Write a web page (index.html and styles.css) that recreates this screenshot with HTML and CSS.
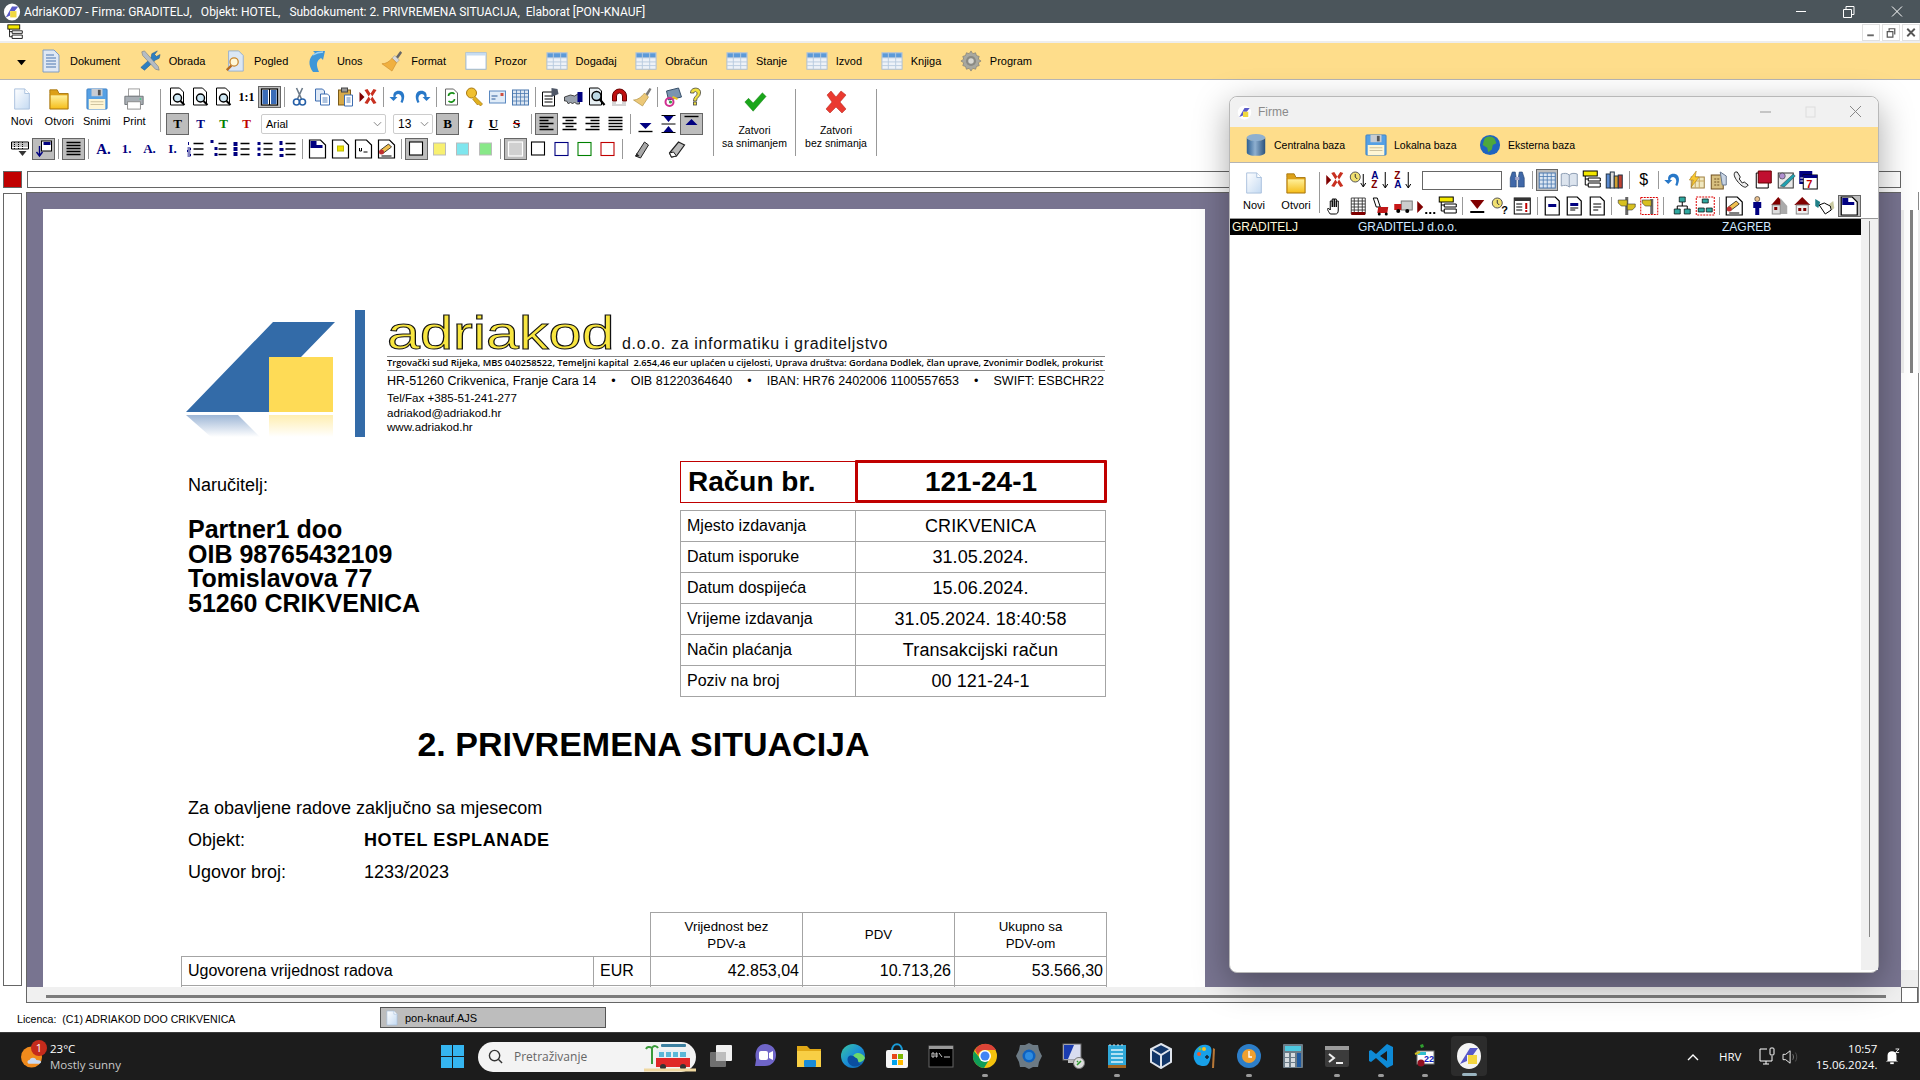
FILE: index.html
```html
<!DOCTYPE html>
<html lang="hr">
<head>
<meta charset="utf-8">
<title>AdriaKOD7</title>
<link rel="stylesheet" href="styles.css">
</head>
<body>
<svg class="defs" width="0" height="0">
<defs>
<linearGradient id="gPage" x1="0" y1="0" x2="1" y2="1"><stop offset="0" stop-color="#fff"/><stop offset="1" stop-color="#c4daf2"/></linearGradient>
<linearGradient id="gFold" x1="0" y1="0" x2="0" y2="1"><stop offset="0" stop-color="#fff09a"/><stop offset="1" stop-color="#f6c020"/></linearGradient>
<linearGradient id="gDb" x1="0" y1="0" x2="1" y2="0"><stop offset="0" stop-color="#2c5f92"/><stop offset=".45" stop-color="#8fb0d0"/><stop offset="1" stop-color="#2a527c"/></linearGradient>
<linearGradient id="gFadeB" x1="0" y1="0" x2="0" y2="1"><stop offset="0" stop-color="#9db6d6"/><stop offset="1" stop-color="#fff"/></linearGradient>
<linearGradient id="gFadeY" x1="0" y1="0" x2="0" y2="1"><stop offset="0" stop-color="#ffeeb0"/><stop offset="1" stop-color="#fff"/></linearGradient>
<linearGradient id="gEdge" x1="0" y1="0" x2="1" y2="1"><stop offset="0" stop-color="#37c6a0"/><stop offset=".5" stop-color="#1b8fd6"/><stop offset="1" stop-color="#0c5aa8"/></linearGradient>

<symbol id="m-doc" viewBox="0 0 20 24"><path d="M2 1h11l5 5v17H2z" fill="#dfe8f4" stroke="#7f9cc4"/><path d="M5 6h8M5 9h10M5 12h10M5 15h10M5 18h10" stroke="#4d77b0" stroke-width="1.2"/></symbol>
<symbol id="m-tools" viewBox="0 0 24 24"><path d="M20 1l-3 4 2 2 4-2-1 4-4 2-12 11-4-3L13 9l1-5z" fill="#2d7fc0" stroke="#1d5a90" stroke-width=".6"/><path d="M3 2l3-1 15 17 1 4-4-1L4 6z" fill="#b4bcc4" stroke="#6c747c" stroke-width=".6"/></symbol>
<symbol id="m-pogled" viewBox="0 0 24 24"><path d="M5 1h11l5 5v17H5z" fill="#dbe7f5" stroke="#93aed0"/><circle cx="11" cy="13" r="4.5" fill="#fff8d8" stroke="#c8862c" stroke-width="1.4"/><path d="M8 17l-5 5" stroke="#b66a20" stroke-width="2.5"/></symbol>
<symbol id="m-unos" viewBox="0 0 22 24"><path d="M6 23c-5-7-5-14 2-19l-2-2h12l-2 9-2-2C9 12 9 16 12 23z" fill="#3f97d8"/><path d="M6 6c3-2 7-3 10-3" stroke="#9fd3f4" stroke-width="1.5" fill="none"/></symbol>
<symbol id="m-format" viewBox="0 0 24 24"><path d="M16 8l5-7 2 2-5 7z" fill="#666"/><path d="M15 6l5 5-3 3-5-5z" fill="#d8d8d8" stroke="#888" stroke-width=".5"/><path d="M12 9l5 5-5 9-11-8c4 0 8-2 11-6z" fill="#f0b040" stroke="#c07818" stroke-width=".5"/></symbol>
<symbol id="m-prozor" viewBox="0 0 24 22"><rect x="1" y="2" width="22" height="18" fill="#fff" stroke="#8fb2d8"/><rect x="1" y="2" width="22" height="3" fill="#c6dcf2"/></symbol>
<symbol id="m-table" viewBox="0 0 24 22"><rect x="1" y="2" width="22" height="18" fill="#eef2f8" stroke="#a8bcd4"/><path d="M1.500 2.500h21v5h-21z" fill="#5d9ad8"/><path d="M8 2v18M16 2v18M1 7.500h22M1 12h22M1 16h22" stroke="#b8cade"/></symbol>
<symbol id="m-gear" viewBox="0 0 24 24"><path d="M12 1l2 3 3-1 1 3 3 1-1 3 3 2-3 2 1 3-3 1-1 3-3-1-2 3-2-3-3 1-1-3-3-1 1-3-3-2 3-2-1-3 3-1 1-3 3 1z" fill="#a8a8a0" stroke="#70706a" stroke-width=".6"/><circle cx="12" cy="12" r="5.500" fill="#8a8a84"/><circle cx="12" cy="12" r="3" fill="#d8d8d2"/></symbol>

<symbol id="b-new" viewBox="0 0 22 24"><path d="M3 1h11l5 5v17H3z" fill="url(#gPage)" stroke="#a6bedc"/><path d="M14 1v5h5" fill="#fff" stroke="#a6bedc"/></symbol>
<symbol id="b-open" viewBox="0 0 24 24"><path d="M2 6V2h8l2 4h10v17H2z" fill="#dca018" stroke="#a87810"/><rect x="3" y="8" width="18" height="14" fill="url(#gFold)"/></symbol>
<symbol id="b-save" viewBox="0 0 24 24"><rect x="1" y="1" width="22" height="22" rx="1" fill="#55a0e4" stroke="#3c80c4"/><rect x="6" y="1" width="12" height="8" fill="#c8ccd2"/><rect x="13" y="2" width="3" height="6" fill="#555"/><rect x="3" y="12" width="18" height="11" fill="#fff6d4"/><path d="M5 15h14M5 18h14" stroke="#c8bc98"/></symbol>
<symbol id="b-print" viewBox="0 0 24 24"><rect x="6" y="1" width="12" height="8" fill="#fff" stroke="#999"/><path d="M2 9h20v9H2z" fill="#a8aeb4" stroke="#6d7378"/><rect x="5" y="15" width="14" height="8" fill="#fff" stroke="#888"/><circle cx="19" cy="12" r="1" fill="#4c8"/></symbol>
<symbol id="b-check" viewBox="0 0 26 22"><path d="M2 11l4-4 5 5L21 1l4 4-14 16z" fill="#1aa61a" stroke="#0c7a0c" stroke-width=".5"/></symbol>
<symbol id="b-cross" viewBox="0 0 24 24"><path d="M3 5l4-4 5 6 5-6 5 4-6 7 6 7-4 4-6-6-6 6-4-4 6-7z" fill="#ea3a30" stroke="#b02018" stroke-width=".5"/></symbol>

<symbol id="t-prev" viewBox="0 0 20 20"><path d="M3 1h9l4 4v13H3z" fill="#fff" stroke="#000"/><circle cx="10" cy="11" r="4" fill="#cfe8f4" stroke="#000" stroke-width="1.4"/><path d="M13 14l4 4" stroke="#000" stroke-width="2"/></symbol>
<symbol id="t-book" viewBox="0 0 20 20"><rect x="2" y="2" width="16" height="16" fill="#fff" stroke="#000" stroke-width="1.2"/><rect x="3" y="3" width="5.500" height="14" fill="#3a6cb8"/><rect x="11.500" y="3" width="5.500" height="14" fill="#3a6cb8"/><path d="M10 2v16" stroke="#000"/></symbol>
<symbol id="t-cut" viewBox="0 0 20 20"><path d="M7 1l5 11M13 1l-5 11" stroke="#6c7a88" stroke-width="1.6"/><circle cx="7" cy="15" r="3" fill="none" stroke="#2760a8" stroke-width="1.6"/><circle cx="13" cy="15" r="3" fill="none" stroke="#2760a8" stroke-width="1.6"/></symbol>
<symbol id="t-copy" viewBox="0 0 20 20"><path d="M3 2h7l2 2v10H3z" fill="#dfe9f6" stroke="#3c6cb0"/><path d="M8 7h7l2 2v9H8z" fill="#fff" stroke="#3c6cb0"/><path d="M10 11h5M10 13h5M10 15h5" stroke="#5d87c0"/></symbol>
<symbol id="t-paste" viewBox="0 0 20 20"><rect x="3" y="3" width="12" height="15" fill="#d8aa48" stroke="#7a5a18"/><rect x="6" y="1" width="6" height="4" fill="#999" stroke="#444"/><path d="M9 8h8v11H9z" fill="#fff" stroke="#3c6cb0"/><path d="M11 11h4M11 13h4M11 15h4" stroke="#5d87c0"/></symbol>
<symbol id="t-del" viewBox="0 0 20 20"><path d="M1 5l5 5-5 5z" fill="#800000"/><path d="M6 3l3-1 9 14-3 1zM18 3l-3-1-9 14 3 1z" fill="#c83020"/></symbol>
<symbol id="t-undo" viewBox="0 0 20 20"><path d="M5 10c-1-5 3-7 7-6 4 1 5 6 2 12l-2-1c2-4 1-7-2-8-2 0-3 1-3 3l2 0-4 4-4-4z" fill="#2878c8"/></symbol>
<symbol id="t-redo" viewBox="0 0 20 20"><path d="M15 10c1-5-3-7-7-6-4 1-5 6-2 12l2-1c-2-4-1-7 2-8 2 0 3 1 3 3l-2 0 4 4 4-4z" fill="#2878c8"/></symbol>
<symbol id="t-refresh" viewBox="0 0 20 20"><path d="M4 2h8l4 4v12H4z" fill="#fff" stroke="#666"/><path d="M7 9c0-3 4-4 6-2M13 12c0 3-4 4-6 2" stroke="#189018" stroke-width="1.6" fill="none"/></symbol>
<symbol id="t-key" viewBox="0 0 20 20"><circle cx="7" cy="6" r="5" fill="#f0c030" stroke="#a87810"/><path d="M10 9l8 8-2 2-2-2-1 1-5-6" fill="#e0b020" stroke="#a87810" stroke-width=".7"/></symbol>
<symbol id="t-mail" viewBox="0 0 20 20"><rect x="2" y="4" width="16" height="12" fill="#e0ecf8" stroke="#5a88c0"/><path d="M4 9h6M4 12h4" stroke="#2a5a98"/><rect x="13" y="6" width="3" height="3" fill="#d05040"/></symbol>
<symbol id="t-grid" viewBox="0 0 20 20"><rect x="2" y="3" width="16" height="15" fill="#dce6f2" stroke="#4a78b0"/><path d="M2 6.500h16M2 10h16M2 14h16M6 3v15M10 3v15M14 3v15" stroke="#4a78b0" stroke-width=".8"/></symbol>
<symbol id="t-props" viewBox="0 0 20 20"><path d="M2 5h12v14H2z" fill="#fff" stroke="#000"/><path d="M4 9h8M4 12h8M4 15h8" stroke="#000"/><path d="M11 1l6 1 1 5-7 3z" fill="#505868"/></symbol>
<symbol id="t-hands" viewBox="0 0 20 20"><path d="M1 10l6-2 4 1 5-3v11l-3 0-2-2-2 2-2-2-2 2-2-3H1z" fill="#9aa2ac" stroke="#222" stroke-width=".8"/><path d="M14 5h5v10h-5z" fill="#000080"/></symbol>
<symbol id="t-find" viewBox="0 0 20 20"><path d="M3 1h9l3 3v14H3z" fill="#e8f0f4" stroke="#000"/><circle cx="10" cy="9" r="4.500" fill="#bcd8e4" stroke="#000" stroke-width="1.4"/><path d="M13 12l5 6" stroke="#000" stroke-width="2.200"/></symbol>
<symbol id="t-magnet" viewBox="0 0 20 20"><path d="M3 14V9a7 7 0 0 1 14 0v5h-4V9a3 3 0 0 0-6 0v5z" fill="#c01010" stroke="#600"/><path d="M3 16h4M13 16h4M3 18h14" stroke="#555" stroke-dasharray="1 1"/></symbol>
<symbol id="t-brush" viewBox="0 0 20 20"><path d="M13 7l4-6 2 1-4 7z" fill="#777"/><path d="M12 6l4 4-6 9-9-6c4 0 8-3 11-7z" fill="#ecc878" stroke="#a88838" stroke-width=".6"/></symbol>
<symbol id="t-color" viewBox="0 0 20 20"><path d="M4 4l12-3 3 9-13 3z" fill="#7a94b0" stroke="#38506a"/><circle cx="7" cy="15" r="4" fill="none" stroke="#d03090" stroke-width="2"/><circle cx="8" cy="15" r="1.600" fill="#30a040"/><path d="M10 10l5 2" stroke="#f0c020" stroke-width="2"/></symbol>
<symbol id="t-help" viewBox="0 0 20 20"><path d="M5 6c0-7 11-6 10 0 0 4-4 4-4 8H8c0-5 4-5 3.500-8-.5-2-3-2-3 0z" fill="#f0e040" stroke="#444" stroke-width=".8"/><rect x="8" y="15" width="3" height="3" fill="#f0e040" stroke="#444" stroke-width=".8"/></symbol>
<symbol id="a-left" viewBox="0 0 20 20"><path d="M3 3.500h14M3 6.500h9M3 9.500h14M3 12.500h9M3 15.500h14" stroke="#000" stroke-width="1.400"/></symbol>
<symbol id="a-center" viewBox="0 0 20 20"><path d="M3 3.500h14M6 6.500h8M3 9.500h14M6 12.500h8M3 15.500h14" stroke="#000" stroke-width="1.400"/></symbol>
<symbol id="a-right" viewBox="0 0 20 20"><path d="M3 3.500h14M8 6.500h9M3 9.500h14M8 12.500h9M3 15.500h14" stroke="#000" stroke-width="1.400"/></symbol>
<symbol id="a-just" viewBox="0 0 20 20"><path d="M3 3.500h14M3 6.500h14M3 9.500h14M3 12.500h14M3 15.500h14" stroke="#000" stroke-width="1.400"/></symbol>
<symbol id="v-bot" viewBox="0 0 20 20"><path d="M4 9h12l-6 6z" fill="#000080"/><path d="M3 17.500h14" stroke="#000" stroke-width="1.400"/></symbol>
<symbol id="v-mid" viewBox="0 0 20 20"><path d="M5 2h10l-5 6zM5 18h10l-5-6z" fill="#000080"/><path d="M3 1.500h14M3 10h14M3 18.500h14" stroke="#000"/></symbol>
<symbol id="v-top" viewBox="0 0 20 20"><path d="M4 11h12l-6-6z" fill="#000080"/><path d="M3 2.500h14" stroke="#000" stroke-width="1.400"/></symbol>
<symbol id="r-kbd" viewBox="0 0 20 20"><path d="M1 3h17v7H1z" fill="#fff" stroke="#000"/><path d="M2 5h15M2 7h15M4 3v7M8 3v7M12 3v7" stroke="#000" stroke-dasharray="1 1"/><path d="M8 12h8l-4 5z" fill="#333"/></symbol>
<symbol id="r-ret" viewBox="0 0 20 20"><rect x="8" y="2" width="10" height="10" fill="#fff" stroke="#000"/><rect x="10" y="3" width="7" height="3" fill="#000080"/><path d="M6 7v9M3 13l3 4 3-4" stroke="#000080" fill="none" stroke-width="1.400"/></symbol>
<symbol id="l-num" viewBox="0 0 20 20"><path d="M8 4.500h10M8 10h10M8 15.500h10" stroke="#000" stroke-width="1.400"/><path d="M3 3v3M2 9h3v2H2v2h3M2 15h3v2H2" stroke="#000080" fill="none"/></symbol>
<symbol id="l-a" viewBox="0 0 20 20"><path d="M10 4.500h8M10 10h8M10 15.500h8" stroke="#000" stroke-width="1.400"/><path d="M2 1h3v3H2zM6 8h3v3H6zM6 14h3v3H6z" fill="#000080"/></symbol>
<symbol id="l-b" viewBox="0 0 20 20"><path d="M9 4.500h9M9 10h9M9 15.500h9" stroke="#000" stroke-width="1.400"/><path d="M2 3h4v4H2zM2 8h4v4H2zM2 13h4v4H2z" fill="#000080"/></symbol>
<symbol id="l-c" viewBox="0 0 20 20"><path d="M9 4.500h9M9 10h9M9 15.500h9" stroke="#000" stroke-width="1.400"/><path d="M3 3h3v3H3zM3 8.500h3v3H3zM3 14h3v3H3z" fill="#000080"/></symbol>
<symbol id="l-d" viewBox="0 0 20 20"><path d="M8 4.500h10M8 10h10M8 15.500h10" stroke="#000" stroke-width="1.400"/><path d="M2 2h3v4H2zM2 9h4v3H2zM2 15h4v3H2z" fill="#000080"/></symbol>
<symbol id="d-a" viewBox="0 0 20 20"><path d="M2 1h11l5 5v13H2z" fill="#fff" stroke="#000" stroke-width="1.200"/><path d="M3 2h6v4h6v3H3z" fill="#000080"/></symbol>
<symbol id="d-b" viewBox="0 0 20 20"><path d="M2 1h11l5 5v13H2z" fill="#fff" stroke="#000" stroke-width="1.200"/><rect x="7" y="7" width="6" height="5" fill="#f0e000" stroke="#bb0" /></symbol>
<symbol id="d-c" viewBox="0 0 20 20"><path d="M2 1h11l5 5v13H2z" fill="#fff" stroke="#000" stroke-width="1.200"/><path d="M6 9v3h2V9M10 13h4" stroke="#000" fill="none"/></symbol>
<symbol id="d-d" viewBox="0 0 20 20"><path d="M2 1h11l5 5v13H2z" fill="#fff" stroke="#000" stroke-width="1.200"/><path d="M4 11l8-6 3 3-8 6z" fill="#f0c050" stroke="#000" stroke-width=".7"/><circle cx="5" cy="13" r="2.500" fill="#c03030"/><path d="M5 17h10" stroke="#000"/></symbol>
<symbol id="s-plain" viewBox="0 0 20 20"><rect x="3" y="3" width="13" height="13" fill="#fff" stroke="#000" stroke-width="1.100"/></symbol>
<symbol id="s-grey" viewBox="0 0 20 20"><rect x="3" y="3" width="14" height="14" fill="#d0d0d0" stroke="#fff" stroke-width="1.200"/></symbol>
<symbol id="s-blue" viewBox="0 0 20 20"><rect x="3.500" y="3.500" width="13" height="13" fill="#fff" stroke="#000080" stroke-width="1.100"/></symbol>
<symbol id="s-green" viewBox="0 0 20 20"><rect x="3.500" y="3.500" width="13" height="13" fill="#fff" stroke="#008000" stroke-width="1.100"/></symbol>
<symbol id="s-red" viewBox="0 0 20 20"><rect x="3.500" y="3.500" width="13" height="13" fill="#fff" stroke="#c00000" stroke-width="1.100"/></symbol>
<symbol id="s-dy" viewBox="0 0 20 20"><rect x="4" y="4" width="12" height="12" fill="#f8f070" stroke="#bbb"/></symbol>
<symbol id="s-dc" viewBox="0 0 20 20"><rect x="4" y="4" width="12" height="12" fill="#7fe6ee" stroke="#bbb"/></symbol>
<symbol id="s-dg" viewBox="0 0 20 20"><rect x="4" y="4" width="12" height="12" fill="#88e888" stroke="#bbb"/></symbol>
<symbol id="p-a" viewBox="0 0 20 20"><path d="M3 17L12 3l4 3-8 13z" fill="#a8a8a8" stroke="#222"/><path d="M3 18l1-4 3 3z" fill="#222"/></symbol>
<symbol id="p-b" viewBox="0 0 20 20"><path d="M3 14L12 3l6 3-8 11-5 1z" fill="#bbb" stroke="#222" stroke-width="1.200"/><path d="M3 14l4-1 3 4-5 1z" fill="#fff" stroke="#222"/></symbol>

<symbol id="f-db" viewBox="0 0 22 26"><ellipse cx="11" cy="5" rx="10" ry="4" fill="#8fb0d0"/><path d="M1 5v16c0 5 20 5 20 0V5c0 5-20 5-20 0z" fill="url(#gDb)"/></symbol>
<symbol id="f-globe" viewBox="0 0 24 24"><circle cx="12" cy="12" r="11" fill="#1e64c0"/><path d="M6 5c3-3 8-3 11 0l2 5-4 2-1 5-4 3-1-5-5-3z" fill="#4ea83c"/></symbol>
<symbol id="f-time" viewBox="0 0 20 20"><circle cx="7" cy="7" r="5" fill="#f0e070" stroke="#555"/><path d="M7 4v3l2 2" stroke="#333" fill="none"/><path d="M15 4v12M12.500 13l2.500 4 2.500-4" stroke="#000" fill="none"/></symbol>
<symbol id="f-az" viewBox="0 0 20 20"><text x="1" y="9" font-size="10" font-weight="bold" font-family="Liberation Sans" fill="#000080">A</text><text x="1" y="18" font-size="10" font-weight="bold" font-family="Liberation Sans" fill="#800000">Z</text><path d="M15 2v15M12.500 14l2.500 4 2.500-4" stroke="#000" fill="none"/></symbol>
<symbol id="f-za" viewBox="0 0 20 20"><text x="1" y="9" font-size="10" font-weight="bold" font-family="Liberation Sans" fill="#800000">Z</text><text x="1" y="18" font-size="10" font-weight="bold" font-family="Liberation Sans" fill="#000080">A</text><path d="M15 2v15M12.500 14l2.500 4 2.500-4" stroke="#000" fill="none"/></symbol>
<symbol id="f-bino" viewBox="0 0 20 20"><path d="M3 8l2-6h3l1 6v9H3zM17 8l-2-6h-3l-1 6v9h6z" fill="#4068a8" stroke="#20406c" stroke-width=".6"/><rect x="8" y="7" width="4" height="3" fill="#aac"/></symbol>
<symbol id="f-open" viewBox="0 0 20 20"><path d="M2 4c3-1 6-1 8 1 2-2 5-2 8-1v12c-3-1-6-1-8 1-2-2-5-2-8-1z" fill="#dce4ee" stroke="#8e9eb4"/><path d="M10 5v12" stroke="#8e9eb4"/></symbol>
<symbol id="f-tree" viewBox="0 0 20 20"><rect x="1" y="1" width="14" height="5" fill="#f4e800" stroke="#000"/><path d="M6 8h12v3H6zM6 13h12v4H6z" fill="#fff" stroke="#000"/><path d="M3 6v9h3M3 9h3" stroke="#000" fill="none"/></symbol>
<symbol id="f-books" viewBox="0 0 20 20"><rect x="2" y="4" width="4" height="14" fill="#5a8ad0" stroke="#234"/><rect x="6" y="2" width="4" height="16" fill="#ddd" stroke="#234"/><rect x="10" y="6" width="4" height="12" fill="#d0a030" stroke="#234"/><rect x="14" y="5" width="4" height="13" fill="#c04030" stroke="#234"/></symbol>
<symbol id="f-bolt" viewBox="0 0 20 20"><rect x="5" y="7" width="13" height="11" fill="#f0e8c0" stroke="#a08040"/><path d="M5 11h13M9 7v11M13 7v11" stroke="#c8a860"/><path d="M10 1L3 10h4l-2 7 8-10H9z" fill="#f8c830" stroke="#a07010" stroke-width=".5"/></symbol>
<symbol id="f-pack" viewBox="0 0 20 20"><rect x="3" y="5" width="12" height="14" fill="#d8c080" stroke="#705020"/><path d="M12 2l6 4v9h-4z" fill="#c8d4e4" stroke="#6a7a90"/><path d="M6 9h6M6 12h6M6 15h6" stroke="#705020" stroke-dasharray="2 1"/></symbol>
<symbol id="f-phone" viewBox="0 0 20 20"><path d="M4 2c-2 2-1 5 2 9s7 7 9 6l2-2-4-3-2 1-3-4 1-2-3-5z" fill="#eee" stroke="#222"/></symbol>
<symbol id="f-note" viewBox="0 0 20 20"><path d="M3 3h12v15H3z" fill="#fff" stroke="#000"/><path d="M5 1h13v12H5z" fill="#c01030" stroke="#600"/></symbol>
<symbol id="f-chk" viewBox="0 0 20 20"><rect x="2" y="3" width="15" height="15" fill="#e8e8e8" stroke="#333"/><circle cx="6" cy="6" r="3" fill="#b090d0" stroke="#333" stroke-width=".6"/><path d="M4 16L17 4l2 2-11 11z" fill="#20a0b0" stroke="#333" stroke-width=".5"/></symbol>
<symbol id="f-cal" viewBox="0 0 20 20"><rect x="1" y="1" width="13" height="13" fill="#000080"/><rect x="5" y="5" width="14" height="14" fill="#fff" stroke="#000"/><rect x="5" y="5" width="14" height="3" fill="#000080"/><text x="8" y="18" font-size="11" font-weight="bold" font-family="Liberation Sans" fill="#c00000">7</text><path d="M2 8h3M2 11h3" stroke="#fff"/></symbol>
<symbol id="f-hand" viewBox="0 0 20 20"><path d="M5 18c-3-4-3-5-2-6l2 2V5h2v6V3h2v8V3h2v8V5h2v9c0 3-1 4-3 4z" fill="#fff" stroke="#000"/></symbol>
<symbol id="f-stack" viewBox="0 0 20 20"><path d="M3 2h14v16M3 2v16M3 5h14M3 8h14M3 11h14M3 14h14M6 2v16M10 2v16M14 2v16" stroke="#333" fill="none" stroke-width=".9"/><path d="M3 16h14v3H3z" fill="#800000"/></symbol>
<symbol id="f-dig" viewBox="0 0 20 20"><path d="M3 2h4l3 9H6z" fill="#fff" stroke="#000"/><path d="M8 11h10l-1 6H7z" fill="#c01818"/><circle cx="9" cy="18" r="1.500"/><circle cx="16" cy="18" r="1.500"/></symbol>
<symbol id="f-truck" viewBox="0 0 20 20"><rect x="8" y="5" width="11" height="9" fill="#ccc" stroke="#777"/><path d="M1 8h7v6H1z" fill="#c81818"/><circle cx="5" cy="15" r="2"/><circle cx="14" cy="15" r="2"/></symbol>
<symbol id="f-more" viewBox="0 0 20 20"><path d="M2 5l6 6-6 6z" fill="#800000"/><path d="M10 17h2M14 17h2M18 17h2" stroke="#000" stroke-width="2"/></symbol>
<symbol id="f-low" viewBox="0 0 20 20"><path d="M3 4h14l-7 9z" fill="#800000"/><path d="M3 16h14" stroke="#000" stroke-width="2"/></symbol>
<symbol id="f-timeq" viewBox="0 0 20 20"><circle cx="7" cy="7" r="5" fill="#f0e070" stroke="#555"/><path d="M7 4v3l2 2" stroke="#333" fill="none"/><text x="11" y="18" font-size="11" font-weight="bold" font-family="Liberation Sans" fill="#000">?</text></symbol>
<symbol id="f-warn" viewBox="0 0 20 20"><rect x="2" y="2" width="16" height="16" fill="#fff" stroke="#000"/><rect x="2" y="2" width="16" height="3" fill="#333"/><path d="M4 8h6M4 11h6M4 14h6" stroke="#000"/><path d="M14 7v6M14 14v2" stroke="#c00000" stroke-width="2"/></symbol>
<symbol id="f-d1" viewBox="0 0 20 20"><path d="M3 1h10l4 4v14H3z" fill="#fff" stroke="#000" stroke-width="1.200"/><rect x="6" y="8" width="8" height="3" fill="#000080"/></symbol>
<symbol id="f-d2" viewBox="0 0 20 20"><path d="M3 1h10l4 4v14H3z" fill="#fff" stroke="#000" stroke-width="1.200"/><rect x="6" y="7" width="8" height="3" fill="#000080"/><path d="M6 12h8M6 14h5" stroke="#000"/></symbol>
<symbol id="f-d3" viewBox="0 0 20 20"><path d="M3 1h10l4 4v14H3z" fill="#fff" stroke="#000" stroke-width="1.200"/><path d="M6 8h8M6 11h8M6 14h5" stroke="#000"/></symbol>
<symbol id="f-sign" viewBox="0 0 20 20"><rect x="9" y="1" width="3" height="18" fill="#666"/><path d="M2 4h9v6H5l-3-3z" fill="#d8c020" stroke="#333" stroke-width=".6"/><path d="M19 8h-8v6h5l3-3z" fill="#d8c020" stroke="#333" stroke-width=".6"/></symbol>
<symbol id="f-sign2" viewBox="0 0 20 20"><rect x="1.500" y="1.500" width="17" height="17" fill="#fff" stroke="#d00" stroke-dasharray="2 1"/><rect x="11" y="3" width="3" height="15" fill="#666"/><path d="M3 4h9v6H6l-3-3z" fill="#d8c020" stroke="#333" stroke-width=".6"/></symbol>
<symbol id="f-org" viewBox="0 0 20 20"><path d="M7 1h6v5H7zM2 13h6v5H2zM12 13h6v5h-6z" fill="#30a8a0" stroke="#000" stroke-width=".7"/><path d="M10 6v4M5 13v-3h10v3" stroke="#000" fill="none"/></symbol>
<symbol id="f-org2" viewBox="0 0 20 20"><rect x="1" y="1" width="18" height="18" fill="#fff" stroke="#d00" stroke-dasharray="2 1"/><path d="M7 3h6v4H7zM3 12h6v4H3zM11 12h6v4h-6z" fill="#30a8a0" stroke="#000" stroke-width=".7"/></symbol>
<symbol id="f-man" viewBox="0 0 20 20"><circle cx="10" cy="3" r="2.500" fill="#e8c090" stroke="#000" stroke-width=".5"/><path d="M6 6h8v6h-2v7h-4v-7H6z" fill="#000080"/></symbol>
<symbol id="f-house" viewBox="0 0 20 20"><path d="M10 1L2 9h16z" fill="#800000"/><rect x="4" y="9" width="12" height="9" fill="#eee" stroke="#888"/><path d="M6 12h3v3H6zM11 12h3v3h-3z" fill="#800000"/></symbol>
<symbol id="f-house2" viewBox="0 0 20 20"><path d="M9 1L2 9h14z" fill="#800000"/><path d="M11 2l7 8v8h-7z" fill="#aaa"/><rect x="3" y="9" width="8" height="9" fill="#ddd" stroke="#888"/><rect x="5" y="11" width="3" height="3" fill="#800000"/></symbol>
<symbol id="f-shake" viewBox="0 0 20 20"><path d="M1 3l5 3-2 6-3-2z" fill="#208088"/><path d="M19 5l-4 3 3 6 2-2z" fill="#c8c8a0"/><path d="M5 9l5-2 6 3 1 4-6 4z" fill="#fff" stroke="#000"/></symbol>
<symbol id="f-tiny" viewBox="0 0 20 20"><ellipse cx="10" cy="10" rx="9" ry="9.500" fill="#fff"/><path d="M3 16L10 4h7l-4 5H8v5z" fill="#5a5ac8"/><rect x="8" y="9" width="7" height="7" fill="#f0d840"/></symbol>

<symbol id="k-copy" viewBox="0 0 26 26"><rect x="8" y="2" width="16" height="16" rx="1" fill="#f0f0f0"/><rect x="2" y="9" width="16" height="15" rx="1" fill="#6f6f6f"/><rect x="8" y="9" width="10" height="9" fill="#bdbdbd"/></symbol>
<symbol id="k-chat" viewBox="0 0 26 26"><path d="M13 1c7 0 11 5 11 11s-4 11-11 11H3l1-6c-2-8 2-16 9-16z" fill="#6f65c8"/><rect x="7" y="8" width="9" height="9" rx="2" fill="#fff"/><path d="M17 10l4-2v9l-4-2z" fill="#fff"/></symbol>
<symbol id="k-folder" viewBox="0 0 26 26"><path d="M1 3h10l3 3h11v18H1z" fill="#e0a816"/><rect x="1" y="8" width="24" height="16" fill="#f8cf45"/><rect x="8" y="17" width="12" height="7" rx="1" fill="#1a8cd8"/></symbol>
<symbol id="k-edge" viewBox="0 0 26 26"><circle cx="13" cy="13" r="12" fill="url(#gEdge)"/><path d="M25 15c-2 5-8 5-11 3-3-3-1-7 3-8 4 0 7 2 8 5z" fill="#6cd86c"/><path d="M16 15c3 0 1 6 5 6-4 4-11 3-13-2-2-6 3-9 8-4z" fill="#0b4ea0"/></symbol>
<symbol id="k-store" viewBox="0 0 26 26"><path d="M8 8c0-9 10-9 10 0" stroke="#1a9cd8" stroke-width="2" fill="none"/><rect x="2" y="7" width="22" height="18" rx="2" fill="#f6f6f6"/><rect x="8" y="11" width="5" height="5" fill="#e8471c"/><rect x="14" y="11" width="5" height="5" fill="#7cb800"/><rect x="8" y="17" width="5" height="5" fill="#00a4ef"/><rect x="14" y="17" width="5" height="5" fill="#ffb900"/></symbol>
<symbol id="k-cmd" viewBox="0 0 26 26"><rect x="1" y="3" width="24" height="21" fill="#000" stroke="#666"/><rect x="1" y="3" width="24" height="3" fill="#999"/><path d="M4 10h2v4H4zM8 10h1v4H8zM11 10l3 4M16 14h6" stroke="#ccc" fill="none"/></symbol>
<symbol id="k-chrome" viewBox="0 0 26 26"><circle cx="13" cy="13" r="12" fill="#f4c20d"/><path d="M3 7a12 12 0 0 1 21-0H13c-4 0-6 2-7 5z" fill="#db4437"/><path d="M2 8a12 12 0 0 0 10 17l5-8c-4 2-8 0-10-3z" fill="#0f9d58"/><circle cx="13" cy="13" r="6" fill="#fff"/><circle cx="13" cy="13" r="4.500" fill="#4285f4"/></symbol>
<symbol id="k-set" viewBox="0 0 26 26"><path d="M13 0l4 2 5 0 1 5 3 6-3 6-1 5-5 0-4 2-4-2-5 0-1-5-3-6 3-6 1-5 5 0z" fill="#6c7a84"/><circle cx="13" cy="13" r="6.500" fill="#0f62c0"/><circle cx="13" cy="13" r="4" fill="#2f8ce0"/></symbol>
<symbol id="k-rdp" viewBox="0 0 26 26"><rect x="3" y="1" width="18" height="16" fill="#d8dcf0" stroke="#666"/><path d="M4 2h10l-6 14H4z" fill="#1a3cb0"/><rect x="8" y="17" width="8" height="3" fill="#bbb"/><circle cx="19" cy="20" r="5.500" fill="#ddd" stroke="#777"/><path d="M17 22l4-4M17 19l1-1" stroke="#2a9a2a" stroke-width="1.500"/></symbol>
<symbol id="k-note" viewBox="0 0 26 26"><rect x="4" y="2" width="18" height="22" fill="#2fa8d8"/><path d="M7 7h12M7 11h12M7 15h12M7 19h12" stroke="#e0f4fc" stroke-width="1.400"/><rect x="4" y="22" width="18" height="3" fill="#a06420"/><path d="M6 1v2M10 1v2M14 1v2M18 1v2" stroke="#ddd"/></symbol>
<symbol id="k-box" viewBox="0 0 26 26"><path d="M13 1l10 5v13l-10 6-10-6V6z" fill="#123668" stroke="#dfe4ec" stroke-width="2"/><path d="M3 6l10 6 10-6M13 12v13" stroke="#dfe4ec" stroke-width="2" fill="none"/></symbol>
<symbol id="k-paint" viewBox="0 0 26 26"><path d="M2 16C0 7 8 0 15 2c5 1 5 5 4 10-1 6-2 11-7 11-6 0-8-2-10-7z" fill="#18a0e8"/><circle cx="7" cy="11" r="2" fill="#f05a28"/><circle cx="12" cy="6" r="2" fill="#f8c020"/><circle cx="8" cy="6" r="1.500" fill="#7cc040"/><path d="M13 14h4M15 12v4" stroke="#123" stroke-width="1.500"/><path d="M21 5l2 1-1 19h-2z" fill="#b87838"/></symbol>
<symbol id="k-clock" viewBox="0 0 26 26"><circle cx="13" cy="13" r="12" fill="#2d7ec8"/><circle cx="13" cy="13" r="7" fill="#f0a030"/><path d="M13 8v6h3" stroke="#fff" stroke-width="1.400" fill="none"/></symbol>
<symbol id="k-calc" viewBox="0 0 26 26"><rect x="3" y="1" width="20" height="24" rx="1" fill="#6c7c88"/><rect x="5" y="3" width="16" height="5" fill="#4ec8e0"/><path d="M5 10h4v4H5zM11 10h4v4h-4zM5 15h4v4H5zM11 15h4v4h-4zM5 20h4v4H5zM11 20h4v4h-4z" fill="#d6dce0"/><rect x="17" y="10" width="4" height="14" fill="#1e5aa0"/></symbol>
<symbol id="k-term" viewBox="0 0 26 26"><rect x="1" y="3" width="24" height="21" rx="2" fill="#3c3c3c"/><rect x="1" y="3" width="24" height="4" fill="#9a9a9a"/><path d="M5 11l5 4-5 4" stroke="#eee" stroke-width="2" fill="none"/><path d="M12 20h7" stroke="#eee" stroke-width="2"/></symbol>
<symbol id="k-code" viewBox="0 0 26 26"><path d="M19 1l6 3v18l-6 3-11-10-5 4-2-1V8l2-1 5 4zM19 8l-7 5 7 5z" fill="#0e8ad6" fill-rule="evenodd"/></symbol>
<symbol id="k-gadget" viewBox="0 0 26 26"><rect x="5" y="8" width="17" height="13" fill="#fff" stroke="#777"/><rect x="6" y="9" width="8" height="3" fill="#30c0d0"/><text x="12" y="19" font-size="9" font-weight="bold" font-family="Liberation Sans" fill="#1020c0">22</text><path d="M8 2l3-1 1 3-3 1z" fill="#30a030"/><path d="M3 11l5-2" stroke="#d0c020" stroke-width="2"/><circle cx="9" cy="20" r="3.500" fill="#901020"/></symbol>
<symbol id="k-adria" viewBox="0 0 26 26"><ellipse cx="13" cy="13" rx="12" ry="13" fill="#f4f4f4"/><path d="M4 21L14 5h8l-5 7h-6v6z" fill="#5858c8"/><rect x="12" y="12" width="9" height="9" fill="#f4d640"/></symbol>
<symbol id="k-van" viewBox="0 0 52 30"><path d="M8 6c-3-2-5-1-6 1M8 6c2-3 5-2 6 0M8 6v16" stroke="#3a9a3a" stroke-width="2" fill="none"/><rect x="17" y="2" width="25" height="3" rx="1" fill="#3c80a0"/><path d="M12 8h34v17H12z" fill="#e8f0f4"/><path d="M12 16h34v9H12z" fill="#e02828"/><path d="M15 10h5v5h-5zM22 10h5v5h-5zM29 10h5v5h-5zM36 10h6v5h-6z" fill="#5ab8d8"/><circle cx="19" cy="25" r="3" fill="#333"/><circle cx="39" cy="25" r="3" fill="#333"/><path d="M0 28h52" stroke="#f0d8a0" stroke-width="3"/></symbol>
<symbol id="k-weather" viewBox="0 0 24 24"><circle cx="11" cy="12" r="11" fill="#f08a1c"/><path d="M9 19c-3 0-3-4 0-4 1-3 6-3 7 0 3 0 5 1 5 2s-1 2-2 2z" fill="#c8d8f0"/></symbol>
</defs>
</svg>

<header class="titlebar">
  <svg class="title-logo"><use href="#f-tiny"/></svg>
  <span class="title-text">AdriaKOD7 - Firma: GRADITELJ,&nbsp;&nbsp; Objekt: HOTEL,&nbsp;&nbsp; Subdokument: 2. PRIVREMENA SITUACIJA,&nbsp; Elaborat [PON-KNAUF]</span>
  <div class="winctl">
    <svg class="wc" viewBox="0 0 46 23"><path d="M14 11.500h10" stroke="#fff"/></svg>
    <svg class="wc" viewBox="0 0 46 23"><path d="M15.500 9.500h8v8h-8zM18 9V6.500h8v8h-2.500" stroke="#fff" fill="none"/></svg>
    <svg class="wc" viewBox="0 0 46 23"><path d="M18 6.500l10 10M28 6.500l-10 10" stroke="#fff"/></svg>
  </div>
</header>

<div class="mdirow">
  <svg class="mdi-tree"><use href="#f-tree"/></svg>
  <div class="mdi-btns">
    <span class="mdi-btn"><svg viewBox="0 0 16 16"><path d="M4 11h7" stroke="#666" stroke-width="2"/></svg></span>
    <span class="mdi-btn"><svg viewBox="0 0 16 16"><path d="M4 7h6v6H4zM6 6V4h6v6" stroke="#555" fill="none" stroke-width="1.300"/></svg></span>
    <span class="mdi-btn"><svg viewBox="0 0 16 16"><path d="M4 4l8 8M12 4l-8 8" stroke="#555" stroke-width="2"/></svg></span>
  </div>
</div>

<nav class="menubar">
  <svg class="drop" viewBox="0 0 12 8"><path d="M1 1h10L6 7z"/></svg>
  <a class="menu"><svg><use href="#m-doc"/></svg>Dokument</a>
  <a class="menu"><svg><use href="#m-tools"/></svg>Obrada</a>
  <a class="menu"><svg><use href="#m-pogled"/></svg>Pogled</a>
  <a class="menu"><svg><use href="#m-unos"/></svg>Unos</a>
  <a class="menu"><svg><use href="#m-format"/></svg>Format</a>
  <a class="menu"><svg><use href="#m-prozor"/></svg>Prozor</a>
  <a class="menu"><svg><use href="#m-table"/></svg>Događaj</a>
  <a class="menu"><svg><use href="#m-table"/></svg>Obračun</a>
  <a class="menu"><svg><use href="#m-table"/></svg>Stanje</a>
  <a class="menu"><svg><use href="#m-table"/></svg>Izvod</a>
  <a class="menu"><svg><use href="#m-table"/></svg>Knjiga</a>
  <a class="menu"><svg><use href="#m-gear"/></svg>Program</a>
</nav>

<section class="toolbar">
  <div class="tb-main">
    <div class="tb-top">
      <div class="bigs">
        <div class="big"><svg><use href="#b-new"/></svg>Novi</div>
        <div class="big"><svg><use href="#b-open"/></svg>Otvori</div>
        <div class="big"><svg><use href="#b-save"/></svg>Snimi</div>
        <div class="big"><svg><use href="#b-print"/></svg>Print</div>
      </div>
      <div class="tb-rows">
        <div class="row">
          <svg class="ic"><use href="#t-prev"/></svg><svg class="ic"><use href="#t-prev"/></svg><svg class="ic"><use href="#t-prev"/></svg>
          <span class="tc b11">1:1</span>
          <svg class="ic on"><use href="#t-book"/></svg><i class="sep"></i>
          <svg class="ic"><use href="#t-cut"/></svg><svg class="ic"><use href="#t-copy"/></svg><svg class="ic"><use href="#t-paste"/></svg><svg class="ic"><use href="#t-del"/></svg><i class="sep"></i>
          <svg class="ic"><use href="#t-undo"/></svg><svg class="ic"><use href="#t-redo"/></svg><i class="sep"></i>
          <svg class="ic"><use href="#t-refresh"/></svg><svg class="ic"><use href="#t-key"/></svg><svg class="ic"><use href="#t-mail"/></svg><svg class="ic"><use href="#t-grid"/></svg><i class="sep"></i>
          <svg class="ic"><use href="#t-props"/></svg><svg class="ic"><use href="#t-hands"/></svg><svg class="ic"><use href="#t-find"/></svg><svg class="ic"><use href="#t-magnet"/></svg><svg class="ic"><use href="#t-brush"/></svg><i class="sep"></i>
          <svg class="ic"><use href="#t-color"/></svg><svg class="ic"><use href="#t-help"/></svg>
        </div>
        <div class="row row2">
          <span class="tc tt on">T</span><span class="tc tt navy">T</span><span class="tc tt green">T</span><span class="tc tt red">T</span>
          <span class="combo font">Arial<svg viewBox="0 0 10 6"><path d="M1 1l4 4 4-4" stroke="#777" fill="none"/></svg></span>
          <span class="combo size">13<svg viewBox="0 0 10 6"><path d="M1 1l4 4 4-4" stroke="#777" fill="none"/></svg></span>
          <span class="tc tt on fmt">B</span><span class="tc tt ital">I</span><span class="tc tt under">U</span><span class="tc tt strike">S</span><i class="sep"></i>
          <svg class="ic on"><use href="#a-left"/></svg><svg class="ic"><use href="#a-center"/></svg><svg class="ic"><use href="#a-right"/></svg><svg class="ic"><use href="#a-just"/></svg><i class="sep"></i>
          <svg class="ic"><use href="#v-bot"/></svg><svg class="ic"><use href="#v-mid"/></svg><svg class="ic on"><use href="#v-top"/></svg>
        </div>
      </div>
    </div>
    <div class="row row3">
      <svg class="ic"><use href="#r-kbd"/></svg><svg class="ic on"><use href="#r-ret"/></svg><i class="sep"></i>
      <svg class="ic on"><use href="#a-just"/></svg><i class="sep"></i>
      <span class="tc numa big-a">A.</span><span class="tc numa">1.</span><span class="tc numa">A.</span><span class="tc numa">I.</span>
      <svg class="ic"><use href="#l-num"/></svg><svg class="ic"><use href="#l-a"/></svg><svg class="ic"><use href="#l-b"/></svg><svg class="ic"><use href="#l-c"/></svg><svg class="ic"><use href="#l-d"/></svg><i class="sep"></i>
      <svg class="ic"><use href="#d-a"/></svg><svg class="ic"><use href="#d-b"/></svg><svg class="ic"><use href="#d-c"/></svg><svg class="ic"><use href="#d-d"/></svg><i class="sep"></i>
      <svg class="ic on"><use href="#s-plain"/></svg><svg class="ic"><use href="#s-dy"/></svg><svg class="ic"><use href="#s-dc"/></svg><svg class="ic"><use href="#s-dg"/></svg><i class="sep"></i>
      <svg class="ic on"><use href="#s-grey"/></svg><svg class="ic"><use href="#s-plain"/></svg><svg class="ic"><use href="#s-blue"/></svg><svg class="ic"><use href="#s-green"/></svg><svg class="ic"><use href="#s-red"/></svg><i class="sep"></i>
      <svg class="ic pen1"><use href="#p-a"/></svg><svg class="ic pen2"><use href="#p-b"/></svg>
    </div>
  </div>
  <div class="closebtn"><svg><use href="#b-check"/></svg>Zatvori<br>sa snimanjem</div>
  <div class="closebtn last"><svg><use href="#b-cross"/></svg>Zatvori<br>bez snimanja</div>
</section>

<div class="rulerrow">
  <span class="stop"></span>
  <span class="ruler"></span>
</div>

<main class="work">
  <div class="vruler"></div>
  <div class="center">
    <div class="desk">
      <article class="page">
        <div class="logo">
          <svg class="logo-mark" viewBox="0 0 180 127">
            <path d="M87 12h62l-34 35H83v55H0z" fill="#336ba8"/>
            <rect x="83" y="47" width="64" height="55" fill="#fedb56"/>
            <path d="M0 105h52l22 22H25z" fill="url(#gFadeB)"/>
            <rect x="83" y="105" width="64" height="22" fill="url(#gFadeY)"/>
            <rect x="169" y="0" width="10" height="127" fill="#336ba8"/>
          </svg>
          <div class="logo-text">
            <div class="brandline"><span class="brand">adriakod</span><span class="tag">d.o.o. za informatiku i graditeljstvo</span></div>
            <div class="court">Trgovački sud Rijeka, MBS 040258522, Temeljni kapital&nbsp; 2.654,46 eur uplaćen u cijelosti, Uprava društva: Gordana Dodlek, član uprave, Zvonimir Dodlek, prokurist</div>
            <div class="addr"><span>HR-51260 Crikvenica, Franje Cara 14</span><span>•</span><span>OIB 81220364640</span><span>•</span><span>IBAN: HR76 2402006 1100557653</span><span>•</span><span>SWIFT: ESBCHR22</span></div>
            <div class="contact">Tel/Fax +385-51-241-277</div>
            <div class="contact">adriakod@adriakod.hr</div>
            <div class="contact">www.adriakod.hr</div>
          </div>
        </div>

        <div class="parties">
          <div class="buyer">
            <div class="buyer-lbl">Naručitelj:</div>
            <div class="buyer-name">Partner1 doo<br>OIB 98765432109<br>Tomislavova 77<br>51260 CRIKVENICA</div>
          </div>
          <div class="invoice">
            <div class="inv-head"><span class="inv-lbl">Račun br.</span><span class="inv-no">121-24-1</span></div>
            <table class="inv-table">
              <tr><th>Mjesto izdavanja</th><td>CRIKVENICA</td></tr>
              <tr><th>Datum isporuke</th><td>31.05.2024.</td></tr>
              <tr><th>Datum dospijeća</th><td>15.06.2024.</td></tr>
              <tr><th>Vrijeme izdavanja</th><td>31.05.2024. 18:40:58</td></tr>
              <tr><th>Način plaćanja</th><td>Transakcijski račun</td></tr>
              <tr><th>Poziv na broj</th><td>00 121-24-1</td></tr>
            </table>
          </div>
        </div>

        <h1 class="doc-title">2. PRIVREMENA SITUACIJA</h1>
        <div class="facts">
          <div class="fact">Za obavljene radove zaključno sa mjesecom</div>
          <div class="fact"><span class="fact-k">Objekt:</span><b>HOTEL ESPLANADE</b></div>
          <div class="fact"><span class="fact-k">Ugovor broj:</span>1233/2023</div>
        </div>

        <table class="sum">
          <colgroup><col class="c1"><col class="c2"><col class="c3"><col class="c3"><col class="c3"></colgroup>
          <tr class="sum-h"><td class="blank" colspan="2"></td><td>Vrijednost bez<br>PDV-a</td><td>PDV</td><td>Ukupno sa<br>PDV-om</td></tr>
          <tr class="sum-r"><td class="l">Ugovorena vrijednost radova</td><td class="l">EUR</td><td>42.853,04</td><td>10.713,26</td><td>53.566,30</td></tr>
          <tr class="sum-r"><td></td><td></td><td></td><td></td><td></td></tr>
        </table>
      </article>
    </div>
    <div class="hscroll"><span class="hthumb"></span></div>
  </div>
  <div class="vscroll">
    <div class="vtrack"><span class="vthumb"></span></div>
    <div class="vend"></div>
    <div class="corner"></div>
  </div>
</main>

<footer class="status">
  <span class="lic">Licenca:&nbsp; (C1) ADRIAKOD DOO CRIKVENICA</span>
  <span class="filetab"><svg><use href="#b-new"/></svg>pon-knauf.AJS</span>
</footer>

<div class="taskbar">
  <div class="weather">
    <svg class="w-icon"><use href="#k-weather"/></svg>
    <span class="w-badge">1</span>
    <div class="w-text"><span class="w-temp">23°C</span><span class="w-desc">Mostly sunny</span></div>
  </div>
  <svg class="winlogo" viewBox="0 0 23 23"><path d="M0 0h11v11H0zM12 0h11v11H12zM0 12h11v11H0zM12 12h11v11H12z" fill="#35b5f0"/></svg>
  <div class="search">
    <svg class="s-q" viewBox="0 0 16 16"><circle cx="7" cy="7" r="5.500" fill="none" stroke="#333" stroke-width="1.500"/><path d="M11 11l4 4" stroke="#333" stroke-width="1.500"/></svg>
    <span class="s-text">Pretraživanje</span>
    <svg class="s-van"><use href="#k-van"/></svg>
  </div>
  <div class="apps">
    <span class="app"><svg><use href="#k-copy"/></svg></span>
    <span class="app"><svg><use href="#k-chat"/></svg></span>
    <span class="app"><svg><use href="#k-folder"/></svg></span>
    <span class="app"><svg><use href="#k-edge"/></svg></span>
    <span class="app"><svg><use href="#k-store"/></svg></span>
    <span class="app"><svg><use href="#k-cmd"/></svg></span>
    <span class="app run"><svg><use href="#k-chrome"/></svg></span>
    <span class="app"><svg><use href="#k-set"/></svg></span>
    <span class="app"><svg><use href="#k-rdp"/></svg></span>
    <span class="app run"><svg><use href="#k-note"/></svg></span>
    <span class="app"><svg><use href="#k-box"/></svg></span>
    <span class="app"><svg><use href="#k-paint"/></svg></span>
    <span class="app run"><svg><use href="#k-clock"/></svg></span>
    <span class="app"><svg><use href="#k-calc"/></svg></span>
    <span class="app run"><svg><use href="#k-term"/></svg></span>
    <span class="app run"><svg><use href="#k-code"/></svg></span>
    <span class="app run"><svg><use href="#k-gadget"/></svg></span>
    <span class="app active"><svg><use href="#k-adria"/></svg></span>
  </div>
  <div class="tray">
    <svg class="t-chev" viewBox="0 0 12 8"><path d="M1 7l5-5 5 5" stroke="#fff" stroke-width="1.400" fill="none"/></svg>
    <span class="t-lang">HRV</span>
    <svg class="t-net" viewBox="0 0 18 20"><path d="M9 2H2v12h12v-5M5 17h6M8 14v3" stroke="#fff" fill="none"/><rect x="12" y="1" width="4" height="7" rx="1" fill="none" stroke="#fff"/></svg>
    <svg class="t-snd" viewBox="0 0 20 18"><path d="M1 6h3l5-4v14l-5-4H1z" stroke="#fff" fill="none"/><path d="M12 6c1 2 1 4 0 6" stroke="#888" fill="none"/><path d="M15 4c2 3 2 7 0 10" stroke="#555" fill="none"/></svg>
    <div class="clock"><span>10:57</span><span>15.06.2024.</span></div>
    <svg class="t-bell" viewBox="0 0 18 20"><path d="M4 14V8c0-6 10-6 10 0v6l2 1H2z" fill="#fff"/><rect x="7" y="16" width="4" height="2" fill="#fff"/><path d="M13 1h4l-4 4h4" stroke="#fff" fill="none"/></svg>
  </div>
</div>

<aside class="firme">
  <div class="f-title">
    <svg class="f-logo"><use href="#f-tiny"/></svg>
    <span class="f-name">Firme</span>
    <div class="f-ctl">
      <svg viewBox="0 0 45 14"><path d="M17 7h11" stroke="#999"/></svg>
      <svg viewBox="0 0 45 14"><rect x="18" y="2" width="9" height="10" fill="none" stroke="#ddd"/></svg>
      <svg viewBox="0 0 45 14"><path d="M17 1l11 11M28 1L17 12" stroke="#888"/></svg>
    </div>
  </div>
  <div class="f-menu">
    <a class="menu"><svg><use href="#f-db"/></svg>Centralna baza</a>
    <a class="menu"><svg><use href="#b-save"/></svg>Lokalna baza</a>
    <a class="menu"><svg><use href="#f-globe"/></svg>Eksterna baza</a>
  </div>
  <div class="f-tools">
    <div class="big f-big"><svg><use href="#b-new"/></svg>Novi</div>
    <div class="big f-big"><svg><use href="#b-open"/></svg>Otvori</div>
    <i class="sep f-sep"></i>
    <div class="f-rows">
      <div class="row">
        <svg class="ic"><use href="#t-del"/></svg><svg class="ic"><use href="#f-time"/></svg><svg class="ic"><use href="#f-az"/></svg><svg class="ic"><use href="#f-za"/></svg>
        <span class="f-input"></span>
        <svg class="ic"><use href="#f-bino"/></svg><i class="sep"></i>
        <svg class="ic on"><use href="#t-grid"/></svg><svg class="ic"><use href="#f-open"/></svg><svg class="ic"><use href="#f-tree"/></svg><svg class="ic"><use href="#f-books"/></svg><i class="sep"></i>
        <span class="tc dollar">$</span><i class="sep"></i>
        <svg class="ic"><use href="#t-undo"/></svg><svg class="ic"><use href="#f-bolt"/></svg><svg class="ic"><use href="#f-pack"/></svg><svg class="ic"><use href="#f-phone"/></svg><svg class="ic"><use href="#f-note"/></svg><svg class="ic"><use href="#f-chk"/></svg><svg class="ic"><use href="#f-cal"/></svg>
      </div>
      <div class="row">
        <svg class="ic"><use href="#f-hand"/></svg><svg class="ic"><use href="#f-stack"/></svg><svg class="ic"><use href="#f-dig"/></svg><svg class="ic"><use href="#f-truck"/></svg><svg class="ic"><use href="#f-more"/></svg><svg class="ic"><use href="#f-tree"/></svg><i class="sep"></i>
        <svg class="ic"><use href="#f-low"/></svg><svg class="ic"><use href="#f-timeq"/></svg><svg class="ic"><use href="#f-warn"/></svg><i class="sep"></i>
        <svg class="ic"><use href="#f-d1"/></svg><svg class="ic"><use href="#f-d2"/></svg><svg class="ic"><use href="#f-d3"/></svg><i class="sep"></i>
        <svg class="ic"><use href="#f-sign"/></svg><svg class="ic"><use href="#f-sign2"/></svg><i class="sep f-sep-w"></i>
        <svg class="ic"><use href="#f-org"/></svg><svg class="ic"><use href="#f-org2"/></svg><i class="sep"></i>
        <svg class="ic"><use href="#d-d"/></svg><svg class="ic"><use href="#f-man"/></svg><svg class="ic"><use href="#f-house2"/></svg><svg class="ic"><use href="#f-house"/></svg><svg class="ic"><use href="#f-shake"/></svg><svg class="ic on f-last"><use href="#d-a"/></svg>
      </div>
    </div>
  </div>
  <div class="f-list">
    <div class="f-data">
      <div class="f-sel"><span class="fc1">GRADITELJ</span><span class="fc2">GRADITELJ d.o.o.</span><span class="fc3">ZAGREB</span></div>
    </div>
    <div class="f-scroll"><span class="f-thumb"></span></div>
  </div>
</aside>
</body>
</html>
```
FILE: styles.css
```css
* { box-sizing: border-box; }
html, body { margin: 0; padding: 0; }
body {
  width: 1920px; height: 1080px; overflow: hidden; position: relative;
  display: flex; flex-direction: column;
  background: #fff; color: #000;
  font-family: "Liberation Sans", Arial, sans-serif; font-size: 11px;
}
.defs { position: absolute; }
svg { display: block; flex: none; }

/* title bar */
.titlebar { height: 23px; flex: none; display: flex; align-items: center; background: #4b555b; color: #fff; }
.title-logo { width: 18px; height: 18px; margin-left: 3px; }
.title-text { margin-left: 3px; font-family: Roboto, sans-serif; font-size: 12px; white-space: nowrap; }
.winctl { margin-left: auto; display: flex; }
.wc { width: 46px; height: 23px; }

.mdirow { height: 20px; flex: none; display: flex; justify-content: space-between; background: #fff; border-bottom: 2px solid #eee; }
.mdi-tree { width: 17px; height: 17px; margin: 1px 0 0 7px; }
.mdi-btns { display: flex; gap: 2px; padding-top: 1px; }
.mdi-btn { width: 18px; height: 17px; border: 1px solid #e0e0e0; }
.mdi-btn svg { width: 16px; height: 15px; }

/* menu bar */
.menubar { height: 37px; flex: none; display: flex; align-items: center; gap: 18.600px; padding-left: 40px; position: relative; background: #fedd8b; border-bottom: 1px solid #b4b4b4; }
.drop { width: 11px; height: 7px; position: absolute; left: 16px; top: 16px; }
.menu { display: flex; align-items: center; gap: 8px; font-size: 11px; white-space: nowrap; }
.menu svg { width: 22px; height: 24px; }

/* toolbar */
.toolbar { height: 91px; flex: none; display: flex; align-items: flex-start; background: #fff; }
.tb-main { width: 713px; flex: none; padding-top: 6px; }
.tb-top { display: flex; height: 49px; }
.bigs { display: flex; padding-left: 3px; width: 161px; border-right: 1px solid #999; margin-top: 3px; height: 43px; }
.big { width: 37.500px; display: flex; flex-direction: column; align-items: center; line-height: 13px; font-size: 11px; margin-top: -1px; }
.big svg { width: 24px; height: 22px; margin-bottom: 5px; }
.tb-rows { padding-left: 5px; }
.row { display: flex; align-items: center; height: 22px; }
.row2 { margin-top: 5px; height: 21px; }
.row3 { margin-top: 3px; padding-left: 9px; }
.ic { width: 23px; height: 20px; flex: none; }
.ic.on, .tc.on { height: 22px; background: #bdbdbd; border: 1px solid #666; }
.sep { display: block; width: 1px; height: 20px; margin: 0 3px; background: #999; flex: none; }
.tc { width: 23px; height: 20px; flex: none; display: flex; align-items: center; justify-content: center; font-family: "Liberation Serif", serif; }
.b11 { font-family: "Liberation Serif", serif; font-weight: bold; font-size: 12px; }
.tt { font-size: 13px; font-weight: bold; height: 21px; }
.navy { color: #000080; }
.green { color: #008000; }
.red { color: #c00000; }
.ital { font-style: italic; }
.under { text-decoration: underline; }
.strike { text-decoration: line-through; text-decoration-color: #c00000; }
.fmt { margin-left: 3px; }
.combo { display: flex; align-items: center; justify-content: space-between; height: 20px; padding: 0 3px 0 4px; border: 1px solid #ccc; border-radius: 2px; font-size: 11px; background: #fff; }
.combo svg { width: 9px; height: 6px; }
.font { width: 125px; margin-left: 3px; }
.size { width: 40px; margin-left: 7px; font-size: 12px; }
.numa { color: #000080; font-size: 13px; font-weight: bold; }
.big-a { font-size: 15px; }
.pen1 { margin-left: 5px; }
.pen2 { margin-left: 11px; }
.closebtn { width: 82px; height: 67px; margin-top: 9px; flex: none; display: flex; flex-direction: column; align-items: center; text-align: center; line-height: 13px; font-size: 10.500px; border-left: 1px solid #999; padding-top: 1px; }
.closebtn svg { width: 24px; height: 24px; margin-bottom: 10px; }
.closebtn.last { border-right: 1px solid #999; }

/* ruler row */
.rulerrow { height: 21px; flex: none; display: flex; align-items: flex-start; padding-left: 3px; background: #fff; }
.stop { width: 19px; height: 17px; background: #c00000; border: 1px solid #666; }
.ruler { width: 1874px; height: 17px; margin-left: 5px; border: 1px solid #666; background: #fff; }

/* workspace */
.work { height: 811px; flex: none; display: flex; background: #fff; }
.vruler { width: 19px; height: 793px; margin: 1px 4px 0 3px; flex: none; border: 1px solid #666; background: #fff; }
.center { width: 1875px; flex: none; display: flex; flex-direction: column; }
.desk { height: 795px; flex: none; overflow: hidden; padding: 16px 0 0 16px; background: #787490; border-top: 1px solid #666; border-left: 1px solid #666; }
.hscroll { height: 16px; flex: none; padding: 8px 0 0 19px; background: #f0f0f0; border-bottom: 1px solid #666; border-left: 1px solid #666; }
.hthumb { display: block; width: 1840px; height: 3px; background: #7c7c7c; }
.vscroll { width: 18px; flex: none; display: flex; flex-direction: column; border-right: 1px solid #888; }
.vtrack { height: 778px; flex: none; background: #fff; }
.vthumb { display: block; width: 3px; height: 163px; margin: 18px 0 0 9px; background: #808080; box-shadow: -9px 0 0 0 #eee, 8px 0 0 0 #eee; }
.vend { height: 17px; flex: none; background: #eee; }
.corner { height: 16px; flex: none; border: 1px solid #666; background: #fff; }

/* page */
.page { width: 1162px; padding: 101px 0 0 138px; background: #fff; }
.logo { display: flex; height: 127px; margin-left: 5px; }
.logo-mark { width: 180px; height: 127px; }
.logo-text { width: 718px; margin-left: 21px; font-size: 12.500px; }
.brandline { height: 46px; padding-top: 3px; display: flex; align-items: baseline; white-space: nowrap; }
.brand { display: inline-block; width: 235px; font-size: 46px; line-height: 40px; height: 40px; color: #f8e640; -webkit-text-stroke: 1px #111; transform: scaleX(1.29); transform-origin: left center; }
.tag { font-size: 16px; line-height: 18px; letter-spacing: .65px; color: #111; }
.court { height: 15px; border-top: 1.500px solid #888; border-bottom: 1.500px solid #888; font-family: "Open Sans", sans-serif; font-weight: 600; font-size: 9.250px; line-height: 12px; white-space: nowrap; overflow: hidden; }
.addr { display: flex; justify-content: space-between; margin-top: 3px; height: 15px; line-height: 15px; padding-right: 1px; white-space: nowrap; }
.contact { height: 14.500px; line-height: 15px; font-size: 11.600px; }
.addr + .contact { margin-top: 1px; }

.parties { display: flex; margin-top: 23px; height: 236px; }
.buyer { width: 499px; padding: 14px 0 0 7px; }
.buyer-lbl { font-size: 18px; line-height: 22px; }
.buyer-name { margin-top: 21px; font-size: 25px; line-height: 24.700px; font-weight: bold; }
.invoice { width: 427px; }
.inv-head { display: flex; height: 43px; }
.inv-lbl { width: 175px; padding-left: 7px; border: 1px solid #c00000; border-right: 0; margin-top: 1px; font-size: 28px; font-weight: bold; line-height: 40px; }
.inv-no { width: 252px; border: 3px solid #c00000; border-radius: 1px; text-align: center; font-size: 28px; font-weight: bold; line-height: 37px; }
.inv-table { margin-top: 7px; width: 426px; table-layout: fixed; border-collapse: collapse; }
.inv-table th, .inv-table td { height: 31px; padding: 0; border: 1px solid #a4a4a4; }
.inv-table th { width: 175px; padding-left: 6px; font-size: 16px; font-weight: normal; text-align: left; }
.inv-table td { font-size: 18px; letter-spacing: .1px; text-align: center; }

.doc-title { margin: 30px 0 0; width: 925px; font-size: 34px; line-height: 36px; font-weight: bold; text-align: center; }
.facts { margin-top: 30px; padding-left: 7px; font-size: 18px; }
.fact { height: 32px; line-height: 32px; display: flex; }
.fact b { letter-spacing: .6px; }
.fact-k { width: 176px; }
.sum { margin-top: 24px; width: 925px; table-layout: fixed; border-collapse: collapse; }
.c1 { width: 412px; }
.c2 { width: 57px; }
.c3 { width: 152px; }
.sum td { padding: 0; border: 1px solid #a4a4a4; text-align: right; }
.sum-h td { height: 44px; font-size: 13.300px; line-height: 17px; text-align: center; }
.sum-h .blank { border: 0; border-right: 1px solid #a4a4a4; border-bottom: 1px solid #a4a4a4; }
.sum-r td { height: 29px; padding-right: 3px; font-size: 16px; }
.sum-r .l { padding-left: 6px; text-align: left; }

/* status */
.status { height: 29px; flex: none; display: flex; align-items: center; background: #fff; }
.lic { width: 380px; padding: 2px 0 0 17px; font-size: 10.600px; }
.filetab { width: 226px; height: 21px; display: flex; align-items: center; gap: 6px; padding-left: 4px; background: #bdbdbd; border: 1px solid #555; font-size: 11px; }
.filetab svg { width: 14px; height: 18px; }

/* taskbar */
.taskbar { height: 48px; flex: none; display: flex; align-items: center; background: #1c1c1c; border-top: 1px solid #3a3a3a; font-family: "Open Sans", "Noto Sans", sans-serif; color: #fff; }
.weather { width: 441px; height: 40px; flex: none; display: flex; align-items: center; position: relative; padding-left: 21px; }
.w-icon { width: 23px; height: 24px; }
.w-badge { position: absolute; left: 31px; top: 3px; width: 16px; height: 16px; border-radius: 50%; background: #c42b1c; font-size: 11px; line-height: 16px; text-align: center; }
.w-text { display: flex; flex-direction: column; margin-left: 6px; font-size: 11.500px; line-height: 16px; }
.w-desc { color: #c8c8c8; }
.winlogo { width: 23px; height: 23px; }
.search { width: 218px; height: 30px; margin-left: 14px; flex: none; display: flex; align-items: center; border-radius: 15px; background: #f3f3f3; color: #666; padding-left: 10px; }
.s-q { width: 15px; height: 15px; }
.s-text { margin-left: 11px; font-size: 12px; }
.s-van { width: 52px; height: 30px; margin-left: auto; }
.apps { display: flex; margin-left: 3px; margin-top: -2px; }
.app { width: 44px; height: 40px; display: flex; align-items: center; justify-content: center; position: relative; }
.app svg { width: 26px; height: 26px; }
.run::after { content: ""; position: absolute; left: 19px; bottom: -1px; width: 6px; height: 3px; border-radius: 2px; background: #9a9a9a; }
.active { width: 36px; margin-left: 4px; border-radius: 4px; background: #2c2c2c; }
.active::after { content: ""; position: absolute; left: 11px; bottom: 0; width: 15px; height: 3px; border-radius: 2px; background: #9ab4c0; }
.tray { display: flex; align-items: center; flex: 1; font-size: 12px; }
.t-chev { width: 12px; height: 8px; margin-left: 200px; }
.t-lang { margin-left: 20px; font-size: 11.500px; }
.t-net { width: 18px; height: 20px; margin-left: 17px; }
.t-snd { width: 18px; height: 16px; margin-left: 6px; }
.clock { width: 76px; margin-left: 1px; display: flex; flex-direction: column; align-items: flex-end; font-size: 11.500px; line-height: 16px; }
.t-bell { width: 16px; height: 18px; margin-left: 7px; }

/* floating window */
.firme { position: absolute; left: 1229px; top: 96px; width: 650px; height: 877px; display: flex; flex-direction: column; background: #fff; border-radius: 8px; border: 1px solid #b8b8b8; box-shadow: 0 10px 34px rgba(0,0,0,.34); overflow: visible; }
.f-title { height: 30px; flex: none; display: flex; align-items: center; background: #f1f1f1; border-radius: 8px 8px 0 0; padding-left: 7px; }
.f-logo { width: 15px; height: 15px; }
.f-name { margin-left: 6px; font-size: 12px; color: #8a8a8a; }
.f-ctl { margin-left: auto; display: flex; }
.f-ctl svg { width: 45px; height: 14px; }
.f-menu { height: 36px; flex: none; display: flex; align-items: center; gap: 0; padding-left: 15px; background: #fedd8b; border-bottom: 1px solid #b4b4b4; }
.f-menu .menu { margin-right: 0; gap: 7px; font-size: 10.500px; }
.f-menu .menu:nth-child(1) { width: 120px; }
.f-menu .menu:nth-child(2) { width: 114px; }
.f-tools { height: 56px; flex: none; display: flex; padding: 6px 0 0 3px; border-bottom: 1px solid #999; }
.f-big { width: 42px; margin-top: 3px; }
.f-big svg { width: 22px; margin-bottom: 5px; }
.f-sep { height: 41px; margin: 3px 4px 0 2px; }
.f-rows .ic, .f-rows .tc { width: 22.500px; }
.f-rows .row + .row { margin-top: 4px; }
.f-rows .sep { height: 18px; }
.f-input { width: 80px; height: 19px; margin: 0 4px 0 8px; border: 1px solid #666; flex: none; }
.dollar { font-family: "Liberation Sans", sans-serif; font-size: 16px; }
.f-sep-w { margin-right: 7px; }
.f-last { margin-left: 2.500px; }
.f-list { flex: 1; display: flex; min-height: 0; }
.f-data { flex: 1; }
.f-sel { height: 16px; display: flex; background: #000; color: #fff; font-size: 12px; line-height: 16px; white-space: nowrap; }
.fc1 { width: 128px; padding-left: 2px; color: #fff8d8; }
.fc2 { width: 364px; color: #cfe8ff; }
.fc3 { color: #cfe8ff; }
.f-scroll { width: 17px; flex: none; margin-bottom: 2px; background: #f0f0f0; position: relative; }
.f-thumb { position: absolute; left: 8px; top: 2px; width: 1px; height: 716px; background: #888; }
```
